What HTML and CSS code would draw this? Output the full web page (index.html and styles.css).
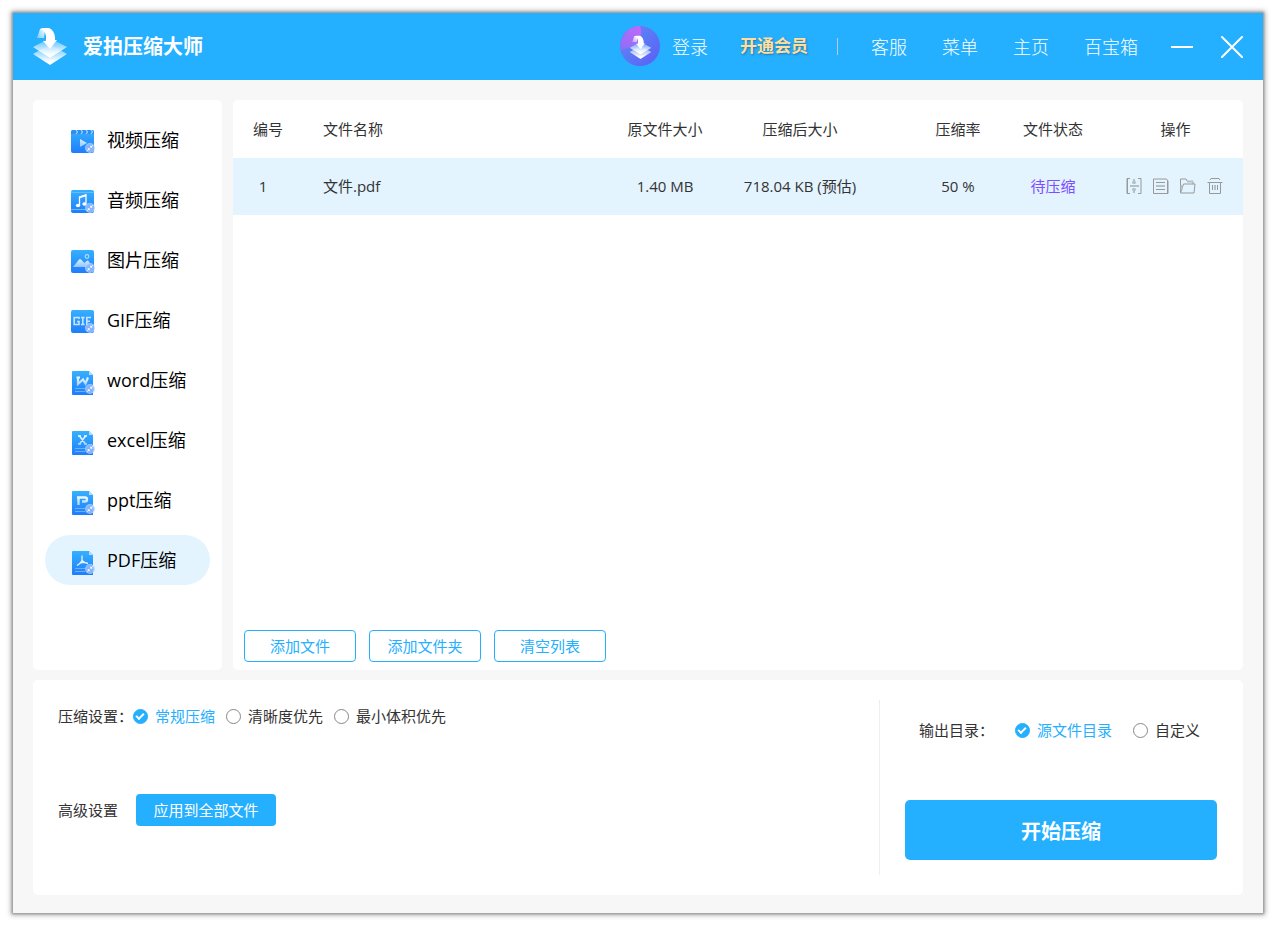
FILE: index.html
```html
<!DOCTYPE html>
<html lang="zh-CN">
<head>
<meta charset="utf-8">
<title>爱拍压缩大师</title>
<link rel="stylesheet" href="styles.css">
</head>
<body>
<svg class="defs" aria-hidden="true">
  <defs>
    <linearGradient id="blue" x1="0" y1="0" x2="0" y2="1"><stop offset="0" stop-color="#36b0ff"/><stop offset="1" stop-color="#1f7dfb"/></linearGradient>
    <linearGradient id="layer" x1="0" y1="0" x2="0" y2="1"><stop offset="0" stop-color="#fff" stop-opacity=".15"/><stop offset=".85" stop-color="#fff"/></linearGradient>
    <linearGradient id="tail" x1="1" y1="0" x2="0" y2="1"><stop offset="0" stop-color="#fff"/><stop offset="1" stop-color="#fff" stop-opacity=".35"/></linearGradient>
    <linearGradient id="orb" x1="0" y1="0" x2="1" y2="1"><stop offset="0" stop-color="#9a6bf6"/><stop offset=".4" stop-color="#5a7cf5"/><stop offset="1" stop-color="#5d5cf6"/></linearGradient>
    <linearGradient id="sector" gradientUnits="userSpaceOnUse" x1="20" y1="0" x2="6" y2="26"><stop offset="0" stop-color="#c268fb"/><stop offset="1" stop-color="#8a70f6"/></linearGradient>
    <linearGradient id="fade" gradientUnits="userSpaceOnUse" x1="0" y1="10" x2="0" y2="22"><stop offset="0" stop-color="#fff"/><stop offset="1" stop-color="#fff" stop-opacity=".5"/></linearGradient>
    <radialGradient id="glass"><stop offset="0" stop-color="#7fb4ff"/><stop offset=".7" stop-color="#8fbcff" stop-opacity=".9"/><stop offset="1" stop-color="#c6dcff" stop-opacity=".7"/></radialGradient>
    <symbol id="stack" viewBox="0 0 36 38">
      <path d="M1 27 18 17l17 10-17 11z" fill="url(#layer)"/>
      <path d="M1 20 18 11l17 9-17 11z" fill="#25aeff" opacity=".35"/>
      <path d="M1 20 18 11l17 9-17 11z" fill="url(#layer)"/>
      <path d="M5 11 8 2q5-2 5 1l-1 8z" fill="url(#tail)"/>
      <path d="M8 2q2-1 5-1h4q5 2 6 9v3h2l-7 9-7-8h3V9q-1-6-6-7z" fill="#fff"/>
    </symbol>
    <symbol id="badge" viewBox="0 0 11 11">
      <circle cx="5.500" cy="5.500" r="5.500" fill="url(#glass)"/>
      <path d="M8.500 2.500 6.300 4.700M6.300 3v1.700H8M2.500 8.500l2.200-2.200M4.700 8V6.300H3" fill="none" stroke="#fff" stroke-width="1"/>
    </symbol>
    <symbol id="tile" viewBox="0 0 26 30">
      <rect x="0" y="5" width="23" height="23" rx="2" fill="url(#blue)"/>
    </symbol>
    <symbol id="doc" viewBox="0 0 26 30">
      <path d="M2 6h16l4 4v20H2q-1 0-1-1V7q0-1 1-1z" fill="url(#blue)"/>
      <path d="M18 6v4h4z" fill="#b7dcff"/>
      <path d="M4 23.500h10M4 26.500h10" stroke="#68b0ff"/>
      <use href="#badge" x="14" y="19" width="10" height="10"/>
    </symbol>
  </defs>
</svg>

<div class="window">
  <header class="topbar">
    <svg class="logo" aria-hidden="true"><use href="#stack"/></svg>
    <h1 class="title">爱拍压缩大师</h1>
    <div class="account">
      <svg class="avatar" viewBox="0 0 40 40" aria-hidden="true">
        <circle cx="20" cy="20" r="20" fill="url(#orb)"/>
        <path d="M20 0q3 8-1 17Q10 22 1 24A20 20 0 0 1 20 0z" fill="url(#sector)"/>
        <use href="#stack" x="9" y="9" width="23" height="24"/>
      </svg>
      <a class="link" href="#">登录</a>
    </div>
    <a class="vip" href="#">开通会员</a>
    <span class="bar"></span>
    <nav class="menu">
      <a class="link" href="#">客服</a>
      <a class="link" href="#">菜单</a>
      <a class="link" href="#">主页</a>
      <a class="link" href="#">百宝箱</a>
    </nav>
    <div class="controls">
      <button class="control" aria-label="最小化"><svg viewBox="0 0 22 22"><path d="M0 11h22" stroke="#fff" stroke-width="2"/></svg></button>
      <button class="control" aria-label="关闭"><svg viewBox="0 0 22 22"><path d="m1 1 20 20M21 1 1 21" stroke="#fff" stroke-width="2" stroke-linecap="round"/></svg></button>
    </div>
  </header>

  <main class="content">
    <div class="upper">
      <nav class="sidebar card">
        <a class="item" href="#"><svg class="icon" viewBox="0 0 26 30"><use href="#tile"/><path d="M0 9h23V7q0-2-2-2H2Q0 5 0 7z" fill="#2a8ff5"/><path d="m5 5 1.500 2L5 9M10 5l1.500 2L10 9M15 5l1.500 2L15 9M20 5l1.500 2L20 9" fill="none" stroke="#a5d8ff" stroke-width="1.200"/><path d="M9 14v8l7-4z" fill="url(#fade)"/><use href="#badge" x="14" y="18" width="10" height="10"/></svg>视频压缩</a>
        <a class="item" href="#"><svg class="icon" viewBox="0 0 26 30"><use href="#tile"/><path d="M0 7.500h23M0 24.500h23" stroke="#62baff"/><path d="M8.500 20v-8l6.500-2v8.500" fill="none" stroke="#fff" stroke-width="1.300"/><path d="M8.500 12.300l6.500-2" stroke="#fff" stroke-width="1.800"/><ellipse cx="7" cy="20.500" rx="2.200" ry="1.700" fill="#fff"/><ellipse cx="13.500" cy="19" rx="2.200" ry="1.700" fill="#fff"/><use href="#badge" x="14" y="18" width="10" height="10"/></svg>音频压缩</a>
        <a class="item" href="#"><svg class="icon" viewBox="0 0 26 30"><use href="#tile"/><path d="m2 22 6-7.500q1-1 2 0l3.500 3.500 2-2q1-1 2 0l4 6z" fill="url(#fade)"/><circle cx="16" cy="11.500" r="1.800" fill="none" stroke="#a8dcff" stroke-width="1.200"/><use href="#badge" x="14" y="18" width="10" height="10"/></svg>图片压缩</a>
        <a class="item" href="#"><svg class="icon" viewBox="0 0 26 30"><use href="#tile"/><path d="M8 14v-1.500H3.200v7H8v-3H6M10 12.500h3.600M11.800 12.500v7M10 19.500h3.600M15.800 20.300v-7.800H20M15.800 16.200H19" fill="none" stroke="#c6e5ff" stroke-width="1.600"/><use href="#badge" x="14" y="18" width="10" height="10"/></svg>GIF压缩</a>
        <a class="item" href="#"><svg class="icon" viewBox="0 0 26 30"><use href="#doc"/><path d="M7 12v7l5-4.500 2.500 4L17 12.500M5.500 12.500H9" fill="none" stroke="url(#fade)" stroke-width="2.200"/></svg>word压缩</a>
        <a class="item" href="#"><svg class="icon" viewBox="0 0 26 30"><use href="#doc"/><path d="m8.500 11 6 8M14.500 11l-6 8M7 11h3M13 11h3M7 19h3M13 19h3" fill="none" stroke="url(#fade)" stroke-width="1.500"/></svg>excel压缩</a>
        <a class="item" href="#"><svg class="icon" viewBox="0 0 26 30"><use href="#doc"/><path d="M6 12.500h8q2 0 2 2t-2 2H11M7.500 12.500v7.500" fill="none" stroke="url(#fade)" stroke-width="2.400"/></svg>ppt压缩</a>
        <a class="item active" href="#"><svg class="icon" viewBox="0 0 26 30"><use href="#doc"/><path d="M11 10.500v5M11 15.500q-1.500 3-5 5M11 15.500q2 2.500 6 3M8.500 18.300q3-1.300 5.500-1" fill="none" stroke="#e6f3ff" stroke-width="1.300"/></svg>PDF压缩</a>
      </nav>

      <section class="list card">
        <table class="files">
          <colgroup><col class="c-no"><col><col class="c-size"><col class="c-after"><col class="c-rate"><col class="c-state"><col class="c-ops"></colgroup>
          <thead>
            <tr><th>编号</th><th class="name">文件名称</th><th>原文件大小</th><th>压缩后大小</th><th class="rate">压缩率</th><th>文件状态</th><th class="ops">操作</th></tr>
          </thead>
          <tbody>
            <tr>
              <td class="no">1</td><td class="name">文件.pdf</td><td>1.40 MB</td><td>718.04 KB (预估)</td><td class="rate">50 %</td><td class="state">待压缩</td>
              <td class="ops">
                <div class="actions">
                  <button class="action" aria-label="压缩"><svg viewBox="0 0 16 16"><path d="M4 .5H1v15h3M12 .5h3v15h-3M1.500 1v14"/><path class="soft" d="M4 8h9M8 1v5M8 10v5M6 4.500h4M6 11.500h4"/></svg></button>
                  <button class="action" aria-label="详情"><svg viewBox="0 0 16 16"><path d="M.5 1h13l1.500 2v12.500H.5zM14.500 3v12M3 4.500h9M3 11.500h9"/><path class="soft" d="M3 8h9"/></svg></button>
                  <button class="action" aria-label="打开目录"><svg viewBox="0 0 16 16"><path d="M.5 14.500V1H6l1.500 2.500H13V6M.5 15 3.500 6H15l-1 9z"/><path class="soft" d="M7 3.500h6M1.500 7v5"/></svg></button>
                  <button class="action" aria-label="删除"><svg viewBox="0 0 16 16"><path d="M.5 4.500h15M3 2l1-1.500h8L13 2M2.500 4.500v11h11v-11M5.500 7v5M10.500 7v5"/><path class="soft" d="M8 7v5"/></svg></button>
                </div>
              </td>
            </tr>
          </tbody>
        </table>
        <div class="toolbar">
          <button class="outline">添加文件</button>
          <button class="outline">添加文件夹</button>
          <button class="outline">清空列表</button>
        </div>
      </section>
    </div>

    <section class="settings card">
      <div class="options">
        <div class="row" role="radiogroup" aria-labelledby="mode">
          <span id="mode">压缩设置：</span>
          <div class="choices">
            <label class="choice"><input type="radio" name="mode" checked><span>常规压缩</span></label>
            <label class="choice"><input type="radio" name="mode"><span>清晰度优先</span></label>
            <label class="choice"><input type="radio" name="mode"><span>最小体积优先</span></label>
          </div>
        </div>
        <div class="row advanced">
          <span>高级设置</span>
          <button class="apply">应用到全部文件</button>
        </div>
      </div>
      <div class="output">
        <div class="row target" role="radiogroup" aria-labelledby="dir">
          <span id="dir">输出目录：</span>
          <label class="choice"><input type="radio" name="dir" checked><span>源文件目录</span></label>
          <label class="choice"><input type="radio" name="dir"><span>自定义</span></label>
        </div>
        <button class="start">开始压缩</button>
      </div>
    </section>
  </main>
</div>
</body>
</html>
```
FILE: styles.css
```css
* { box-sizing: border-box; }
body {
  margin: 0;
  min-height: 100vh;
  padding: 13px 12px 12px 13px;
  display: flex;
  background: #fff;
  color: #333;
  font: 15px/24px "Open Sans", "Noto Sans CJK SC", sans-serif;
}
button { margin: 0; padding: 0; border: 0; background: none; font: inherit; color: inherit; cursor: pointer; white-space: nowrap; }
a { color: inherit; text-decoration: none; white-space: nowrap; }
svg { display: block; flex: none; }
.defs { position: absolute; width: 0; height: 0; }

.window {
  flex: 1;
  display: flex;
  flex-direction: column;
  background: #f7f7f7;
  box-shadow: 0 0 2px 1px #999, 0 0 5px 2px #aaa;
}

.topbar { height: 67px; padding: 0 20px 1px 19px; display: flex; align-items: center; background: #25afff; color: #fff; font-size: 18px; }
.logo { width: 36px; height: 38px; }
.title { margin: 0 auto 0 15px; padding-top: 2px; font-size: 20px; font-weight: 700; white-space: nowrap; }
.account { display: flex; align-items: center; gap: 12px; }
.avatar { width: 40px; height: 40px; }
.link { font-weight: 300; }
.account .link, .menu { padding-top: 1px; }
.vip { margin: 0 29px 0 32px; font-size: 17px; font-weight: 700; color: #ffdf9e; text-shadow: 1px 1px 2px rgba(40, 80, 110, .6); }
.bar { width: 1px; height: 17px; background: #b9c9e8; }
.menu { display: flex; gap: 35px; margin: 0 33px; }
.controls { display: flex; gap: 28px; padding-top: 1px; }
.control { width: 22px; height: 22px; }

.content { flex: 1; display: flex; flex-direction: column; gap: 10px; padding: 20px 20px 18px; }
.card { background: #fff; border-radius: 5px; }
.upper { flex: 1; display: flex; gap: 11px; }

.sidebar { width: 189px; flex: none; padding: 15px 12px; display: flex; flex-direction: column; gap: 10px; }
.item { height: 50px; padding-left: 26px; display: flex; align-items: center; gap: 10px; border-radius: 25px; font-size: 18px; color: #000; }
.item.active { background: #e3f4ff; }
.icon { width: 26px; height: 30px; }

.list { flex: 1; min-width: 0; display: flex; flex-direction: column; justify-content: space-between; }
.files { width: 100%; table-layout: fixed; border-collapse: collapse; text-align: center; white-space: nowrap; }
.files th, .files td { padding: 0; font-weight: 400; }
.files td { padding-bottom: 2px; }
.files tr { height: 58px; }
.files tbody tr { height: 57px; background: #e3f4ff; }
.c-no { width: 70px; }
.c-size { width: 130px; }
.c-after { width: 140px; }
.c-rate { width: 136px; }
.c-state { width: 94px; }
.c-ops { width: 143px; }
.files .no { padding-right: 10px; }
.files .name { padding-left: 20px; text-align: left; }
.files .rate { padding-left: 40px; }
.files .ops { padding-left: 8px; }
.files .state { color: #7d4dff; }
.actions { display: flex; justify-content: center; gap: 11px; padding-right: 2px; }
.action { width: 16px; height: 16px; }
.action svg { fill: none; stroke: #999; stroke-width: 1; }
.action .soft { stroke: #b3c1ca; stroke-width: 2; }
.toolbar { display: flex; gap: 13px; padding: 8px 11px; }
.outline { width: 112px; height: 32px; border: 1px solid #25afff; border-radius: 4px; color: #25afff; background: #fff; }

.settings { display: flex; padding: 20px 0; }
.options { flex: 1; padding: 4px 0 0 25px; display: flex; flex-direction: column; gap: 66px; }
.row { display: flex; align-items: center; white-space: nowrap; }
.choices { display: flex; gap: 11px; }
.choice { display: flex; align-items: center; gap: 7px; cursor: pointer; }
.choice input { appearance: none; position: relative; width: 15px; height: 15px; margin: 0; border: 1px solid #888; border-radius: 50%; background: #fff; }
.choice input:checked { border-color: #25afff; background: #25afff; }
.choice input:checked::after { content: ""; position: absolute; left: 2px; top: 3px; width: 8px; height: 5px; border: solid #fff; border-width: 0 0 2px 2px; box-sizing: border-box; transform: rotate(-45deg); }
.choice input:checked + span { color: #25afff; }
.advanced { gap: 18px; }
.apply { width: 140px; height: 32px; border-radius: 4px; background: #25afff; color: #fff; }
.output { width: 364px; padding: 18px 26px 15px 25px; border-left: 1px solid #eee; display: flex; flex-direction: column; gap: 58px; }
.target { padding-left: 14px; gap: 21px; }
.start { height: 60px; padding-top: 4px; border-radius: 5px; background: #25afff; color: #fff; font-size: 20px; font-weight: 700; }
```
